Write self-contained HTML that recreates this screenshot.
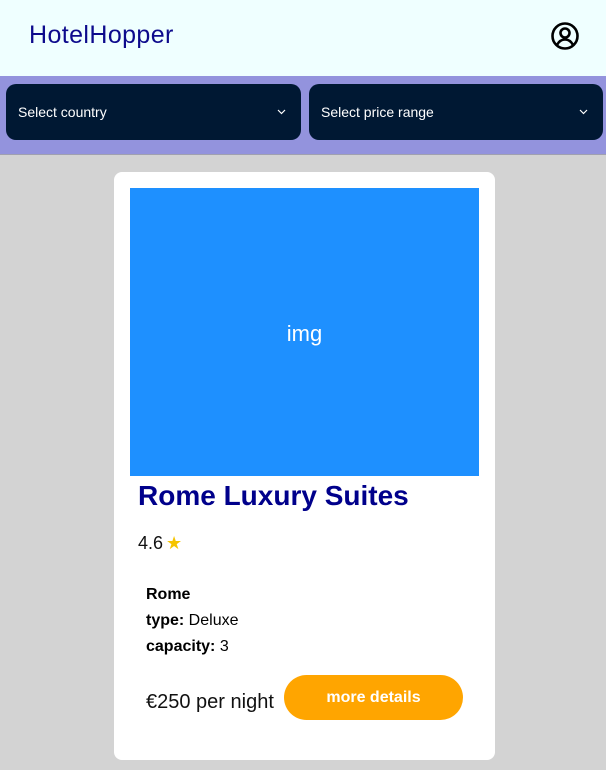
<!DOCTYPE html>
<html><head><meta charset="utf-8"><style>
*{box-sizing:border-box;margin:0;padding:0}
body{width:606px;height:770px;overflow:hidden;background:#d3d3d3;font-family:"Liberation Sans",sans-serif;position:relative}
.hdr{position:absolute;left:0;top:0;width:606px;height:76px;background:#efffff}
.logo{position:absolute;left:29px;top:21px;font-size:25px;color:#0d0a8c;letter-spacing:0.4px}
.user{position:absolute;left:550px;top:21px}
.bar{position:absolute;left:0;top:76px;width:606px;height:79px;background:#9393dd;border-bottom:1px solid #a0a0b0}
.sel{position:absolute;top:8px;height:56px;background:#001833;border-radius:10px;color:#fff;font-size:14px;line-height:56px;padding-left:12px}
.sel svg{position:absolute;right:15px;top:25px}
.card{position:absolute;left:114px;top:172px;width:381px;height:588px;background:#fff;border-radius:8px}
.img{position:absolute;left:16px;top:16px;width:349px;height:288px;background:#1e90ff;color:#fff;font-size:22px;text-align:center;line-height:292px}
h1{position:absolute;left:24px;top:308px;font-size:28px;color:#00008b;font-weight:bold}
.rate{position:absolute;left:24px;top:361px;font-size:18px;color:#111}
.star{color:#f5c400;font-size:18px;margin-left:3px}
.info{position:absolute;left:32px;top:410px;font-size:16px;line-height:26px;color:#000}
.price{position:absolute;left:32px;top:519px;font-size:20px;color:#111}
.btn{position:absolute;left:170px;top:503px;width:179px;height:45px;background:#ffa500;border-radius:23px;color:#fff;font-weight:bold;font-size:16px;text-align:center;line-height:46px}
</style></head><body>
<div class="hdr"><div class="logo">HotelHopper</div>
<svg class="user" width="30" height="30" viewBox="0 0 30 30" fill="none" stroke="#000" stroke-width="2.6"><circle cx="15" cy="15" r="12.5"/><circle cx="15" cy="12" r="4.5"/><path d="M7 24c2-4 5-5.5 8-5.5s6 1.5 8 5.5"/></svg></div>
<div class="bar">
<div class="sel" style="left:6px;width:295px">Select country<svg width="9" height="6" viewBox="0 0 9 6"><path d="M1 1l3.5 3.5L8 1" stroke="#fff" stroke-width="1.2" fill="none"/></svg></div>
<div class="sel" style="left:309px;width:294px">Select price range<svg width="9" height="6" viewBox="0 0 9 6"><path d="M1 1l3.5 3.5L8 1" stroke="#fff" stroke-width="1.2" fill="none"/></svg></div>
</div>
<div class="card">
<div class="img">img</div>
<h1>Rome Luxury Suites</h1>
<div class="rate">4.6<span class="star">&#9733;</span></div>
<div class="info"><b>Rome</b><br><b>type:</b> Deluxe<br><b>capacity:</b> 3</div>
<div class="price">€250 per night</div>
<div class="btn">more details</div>
</div>
</body></html>
